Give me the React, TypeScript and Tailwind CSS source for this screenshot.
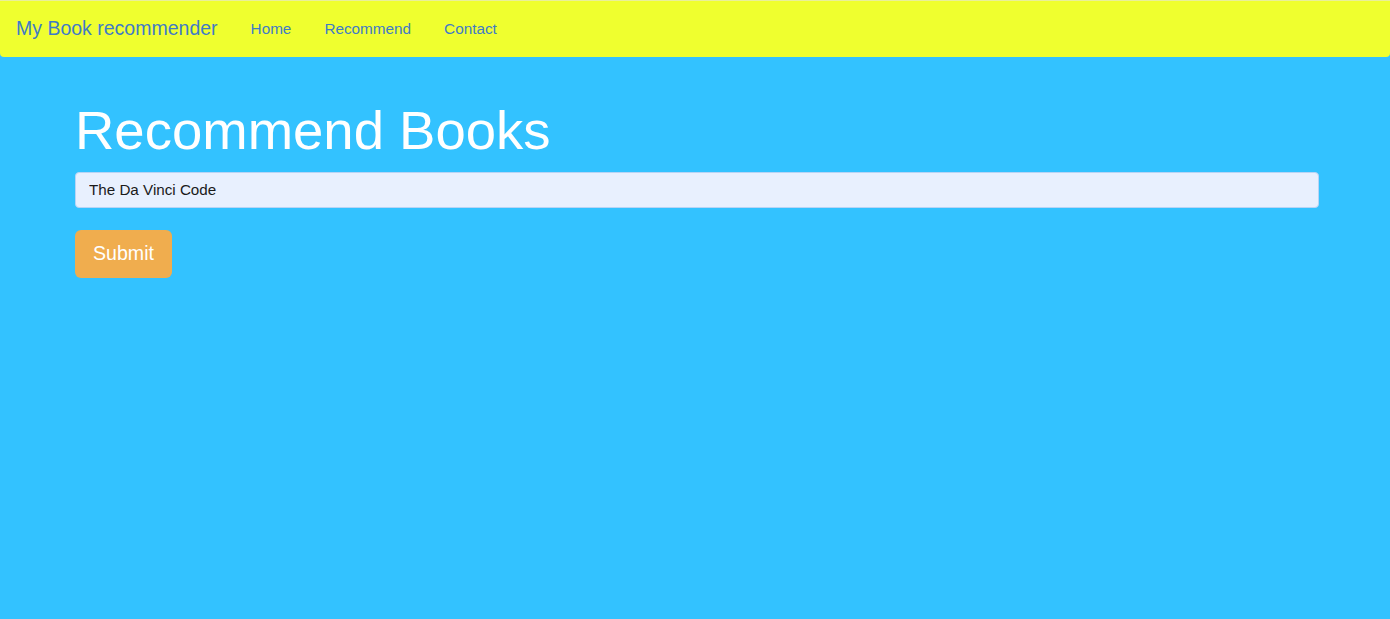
import React, { useState } from 'react';

const LINKS = ['Home', 'Recommend', 'Contact'];

const App: React.FC = () => {
  const [title, setTitle] = useState('The Da Vinci Code');

  return (
    <div className="min-h-screen bg-[#33c2ff] font-['Liberation_Sans',Arial,sans-serif]">
      {/* Navbar */}
      <nav className="h-[57px] bg-[#efff2f] border-t border-[#e9ef9a] rounded-b-[4px] flex items-center pl-4">
        <a href="#" className="text-[19.5px] text-[#3f7bc6] mr-[33px] leading-none">
          My Book recommender
        </a>
        <div className="flex items-center gap-[33px]">
          {LINKS.map(link => (
            <a key={link} href="#" className="text-[15.3px] text-[#3f7bc6] leading-none">
              {link}
            </a>
          ))}
        </div>
      </nav>

      {/* Form */}
      <main className="ml-[75px] mr-[71px] pt-[41px]">
        <h1 className="text-[54.5px] leading-[66px] text-white">Recommend Books</h1>
        <form className="mt-[8px]" onSubmit={e => e.preventDefault()}>
          <input
            value={title}
            onChange={e => setTitle(e.target.value)}
            className="w-full h-[36px] rounded-[4px] border border-[#b8d4f5] bg-[#e8f0fe] px-[13px] pb-[2px] text-[15.2px] text-[#1a1a1a] outline-none"
          />
          <button
            type="submit"
            className="mt-[22px] w-[97px] h-[48px] rounded-[6px] bg-[#f0ad4e] text-white text-[19.6px]"
          >
            Submit
          </button>
        </form>
      </main>
    </div>
  );
};

export default App;
